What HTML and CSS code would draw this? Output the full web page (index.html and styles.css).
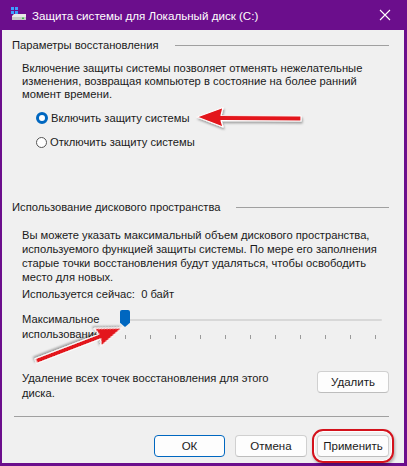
FILE: index.html
```html
<!DOCTYPE html>
<html lang="ru">
<head>
  <meta charset="UTF-8" />
  <title>Защита системы</title>
  <link rel="stylesheet" href="styles.css">
</head>
<body>

  <div class="window">

    <!-- ЗАГОЛОВОК ОКНА -->
    <div class="titlebar">
      <svg class="appicon" width="16" height="14" viewBox="0 0 16 14">
        <rect x="0" y="0" width="3" height="3" fill="#3ba0ff"/>
        <rect x="4" y="0" width="3" height="3" fill="#3ba0ff"/>
        <rect x="0" y="4" width="3" height="3" fill="#3ba0ff"/>
        <rect x="4" y="4" width="3" height="3" fill="#3ba0ff"/>
        <path d="M1 9 L3 7 L15 7 L15 12 L1 12 Z" fill="#e8e8e8"/>
        <rect x="1" y="10" width="14" height="3" fill="#c9c9c9"/>
        <rect x="11" y="10.5" width="2" height="1.5" fill="#35c24a"/>
      </svg>
      <span class="title">Защита системы для Локальный диск (C:)</span>
      <svg class="close" width="12" height="12" viewBox="0 0 12 12">
        <path d="M1 1 L11 11 M11 1 L1 11" stroke="#fff" stroke-width="1.1"/>
      </svg>
    </div>

    <div class="content">

      <!-- ПАРАМЕТРЫ ВОССТАНОВЛЕНИЯ -->
      <div class="group-head first">Параметры восстановления</div>
      <p class="text">Включение защиты системы позволяет отменять нежелательные<br>изменения, возвращая компьютер в состояние на более ранний<br>момент времени.</p>

      <div class="radio checked"><span class="dot"></span>Включить защиту системы</div>
      <div class="radio"><span class="dot"></span>Отключить защиту системы</div>

      <!-- ИСПОЛЬЗОВАНИЕ ДИСКА -->
      <div class="group-head second">Использование дискового пространства</div>
      <p class="text wide">Вы можете указать максимальный объем дискового пространства,<br>используемого функцией защиты системы. По мере его заполнения<br>старые точки восстановления будут удаляться, чтобы освободить<br>место для новых.</p>

      <p class="used">Используется сейчас:&nbsp; 0 байт</p>

      <div class="slider-row">
        <div class="slider-label">Максимальное<br>использование</div>
        <div class="slider">
          <div class="track"></div>
          <div class="thumb"></div>
          <div class="ticks">
            <span></span><span></span><span></span><span></span><span></span><span></span>
            <span></span><span></span><span></span><span></span><span></span>
          </div>
        </div>
      </div>

      <div class="delete-row">
        <div class="delete-text">Удаление всех точек восстановления для этого<br>диска.</div>
        <button class="btn">Удалить</button>
      </div>

      <div class="sep"></div>

      <div class="buttons">
        <button class="btn main">ОК</button>
        <button class="btn">Отмена</button>
        <div class="highlight"><button class="btn">Применить</button></div>
      </div>
    </div>

    <!-- СТРЕЛКИ -->
    <svg class="arrows" width="407" height="466" viewBox="0 0 407 466">
      <defs>
        <filter id="sh" x="-20%" y="-50%" width="140%" height="200%">
          <feDropShadow dx="1" dy="2" stdDeviation="1.2" flood-color="#000" flood-opacity="0.35"/>
        </filter>
      </defs>
      <g filter="url(#sh)">
        <path d="M197 117 L223 107.5 L221 115.5 L301 116 L301 121 L221 120.5 L223 127 Z"
              fill="#e3161b" stroke="#fff" stroke-width="1.2" stroke-linejoin="round"/>
      </g>
      <g filter="url(#sh)" transform="translate(122 328) rotate(159)">
        <path d="M0 0 L26 -9.5 L24 -2.5 L92 -2.5 L92 2.5 L24 2.5 L26 9.5 Z"
              fill="#e3161b" stroke="#fff" stroke-width="1.2" stroke-linejoin="round"/>
      </g>
    </svg>
  </div>

</body>
</html>
```

FILE: styles.css
```css
body {
  margin: 0;
  font-family: "Liberation Sans", Arial, sans-serif;
  font-size: 11.2px;
  color: #1a1a1a;
}
.window {
  position: relative;
  width: 407px;
  height: 466px;
  box-sizing: border-box;
  background: #6b0e8c;
  display: flex;
  flex-direction: column;
  padding: 0 3px 3px 2px;
}
.titlebar {
  height: 30px;
  display: flex;
  align-items: center;
  padding-left: 9px;
  color: #fff;
  font-size: 11.6px;
}
.appicon {
  margin-right: 5px;
  margin-top: -2px;
}
.title {
  flex: 1;
}
.close {
  margin-right: 13px;
}
.content {
  flex: 1;
  background: #f0f0f0;
  padding: 0 15px 0 10px;
}
.group-head {
  display: flex;
  align-items: center;
  height: 15px;
  line-height: 15px;
  white-space: nowrap;
}
.group-head::after {
  content: "";
  flex: 1;
  border-top: 1px solid #a0a0a0;
  margin-left: 16px;
}
.group-head.first {
  margin-top: 8px;
}
.group-head.second {
  margin-top: 50px;
}
.text {
  margin: 9px 0 0 10px;
  line-height: 13px;
  white-space: nowrap;
}
.text.wide {
  line-height: 14px;
  margin-top: 13px;
}
.radio {
  display: flex;
  align-items: center;
  height: 16px;
  margin: 9px 0 0 24px;
}
.radio + .radio {
  margin-top: 8px;
}
.dot {
  width: 11px;
  height: 11px;
  border: 1px solid #555;
  border-radius: 50%;
  box-sizing: border-box;
  margin-right: 3px;
  background: #fff;
}
.radio.checked .dot {
  width: 12px;
  height: 12px;
  border: 3.5px solid #0067c0;
}
.used {
  margin: 3px 0 0 10px;
  line-height: 15px;
}
.slider-row {
  display: flex;
  margin: 10px 0 0 10px;
  line-height: 15px;
}
.slider-label {
  width: 100px;
}
.slider {
  position: relative;
  flex: 1;
  height: 34px;
}
.track {
  margin: 7px 0 0 6px;
  height: 2px;
  width: 254px;
  background: #d8d8d8;
  border-radius: 1px;
}
.thumb {
  position: absolute;
  left: -2px;
  top: -2px;
  width: 10px;
  height: 17px;
  background: #0067c0;
  border-radius: 2px 2px 0 0;
  clip-path: polygon(0 0, 100% 0, 100% 75%, 50% 100%, 0 75%);
}
.ticks {
  display: flex;
  justify-content: space-between;
  width: 251px;
  margin: 14px 0 0 3px;
}
.ticks span {
  width: 1px;
  height: 4px;
  background: #9a9a9a;
}
.delete-row {
  display: flex;
  align-items: flex-start;
  justify-content: space-between;
  margin: 25px 0 0 10px;
  line-height: 15px;
}
.delete-text {
  white-space: nowrap;
}
.btn {
  font-family: inherit;
  font-size: 11.5px;
  color: #1a1a1a;
  background: #fdfdfd;
  border: 1px solid #d0d0d0;
  border-bottom-color: #bdbdbd;
  border-radius: 4px;
  width: 72px;
  height: 22px;
  padding: 0;
}
.sep {
  margin: 15px 0 0 2px;
  border-top: 1px solid #a0a0a0;
}
.buttons {
  display: flex;
  justify-content: flex-end;
  align-items: center;
  gap: 10px;
  margin-top: 12px;
}
.btn.main {
  border: 1px solid #0067c0;
  width: 71px;
}
.highlight {
  border: 2.5px solid #d4121c;
  border-radius: 11px;
  padding: 4px 3px;
  margin: 0 -5px 0 -5px;
  box-shadow: 1px 2px 3px rgba(0, 0, 0, 0.3), inset 0 0 0 1px #fff;
}
.arrows {
  position: absolute;
  left: 0;
  top: 0;
  pointer-events: none;
}
```
